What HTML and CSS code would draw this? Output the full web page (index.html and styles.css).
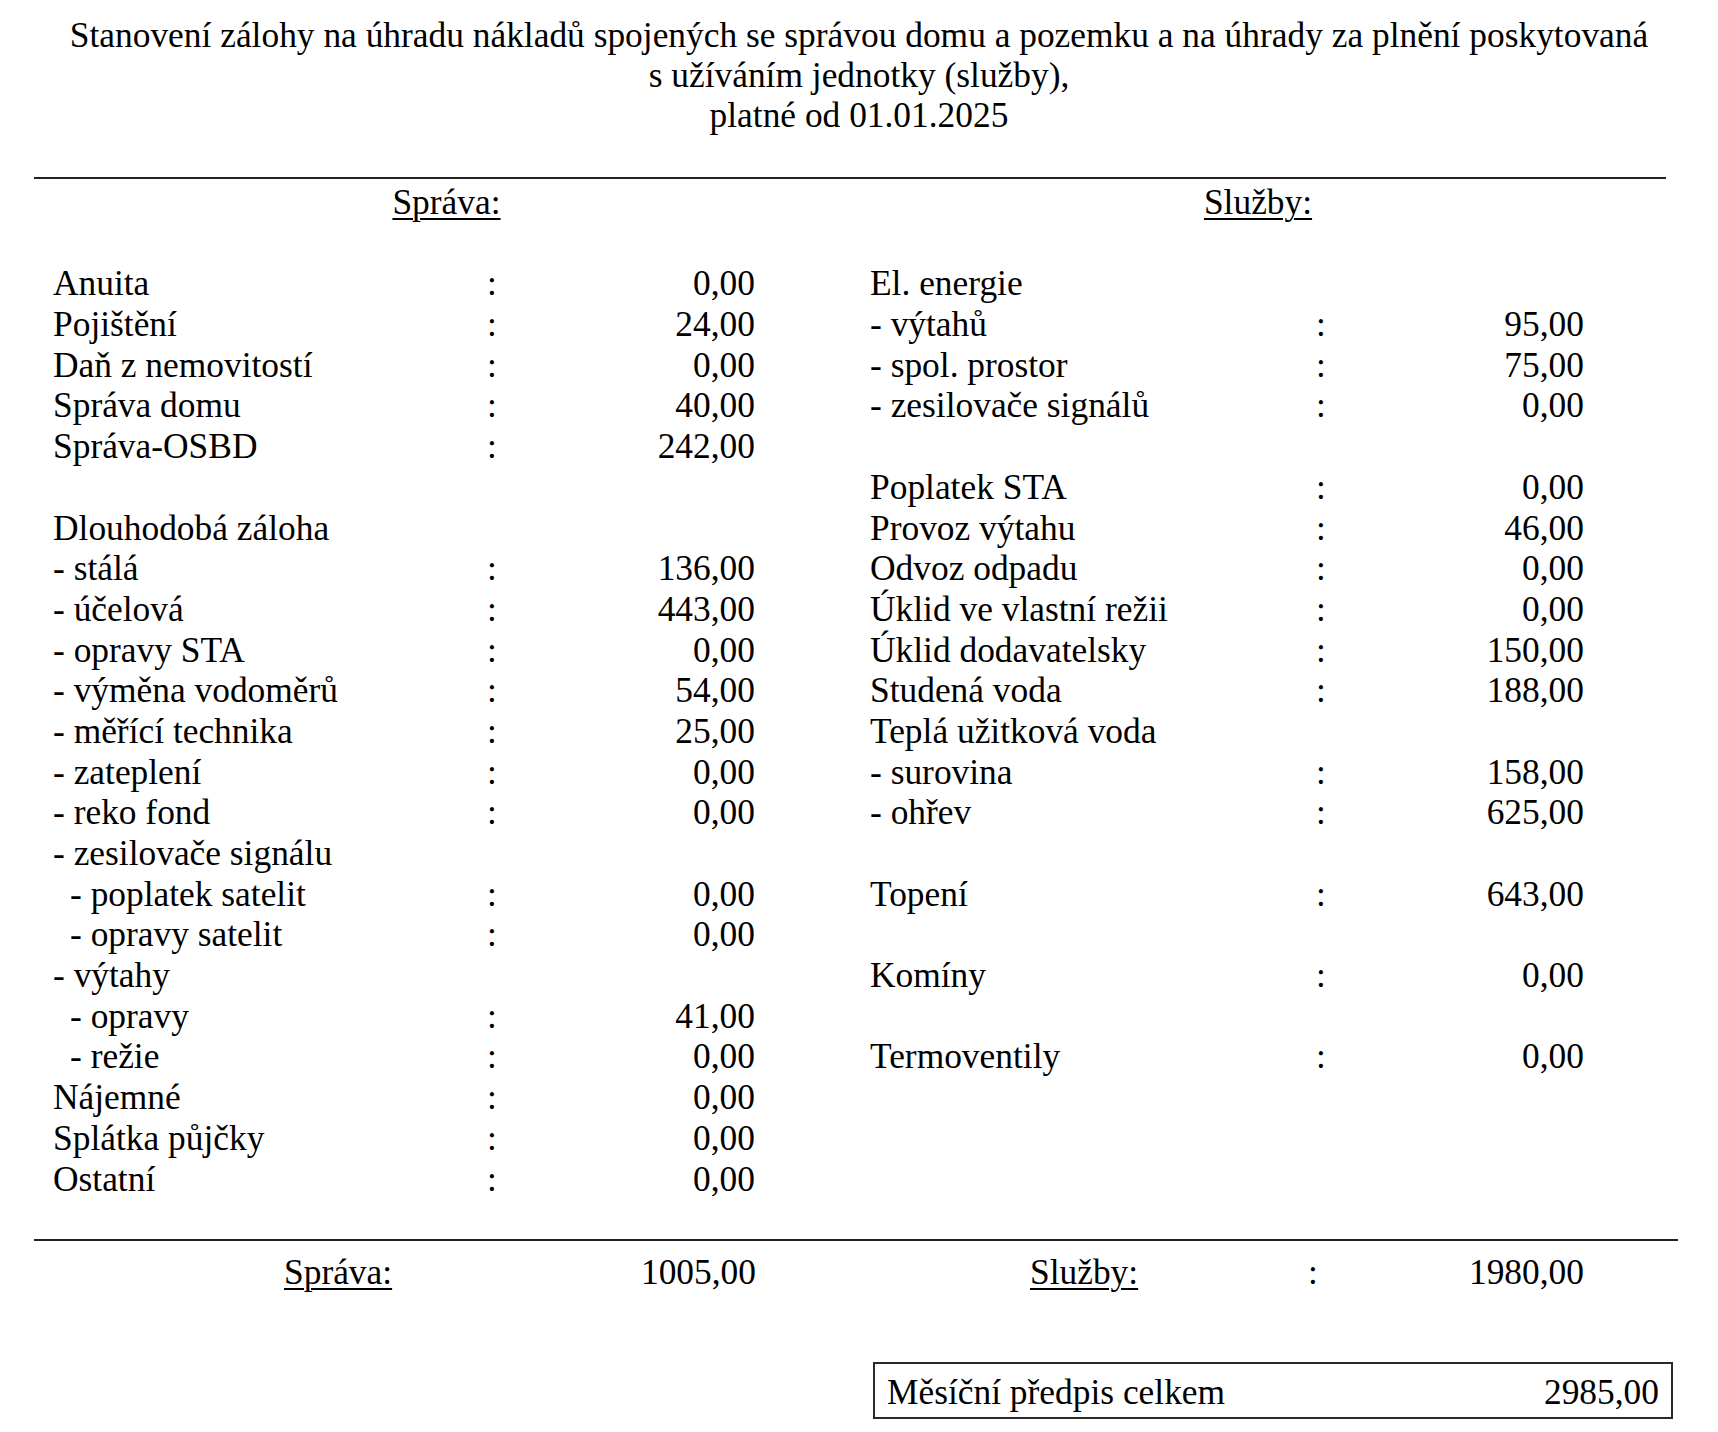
FILE: index.html
```html
<!DOCTYPE html>
<html lang="cs">
<head>
<meta charset="utf-8">
<title>Stanovení zálohy</title>
<link rel="stylesheet" href="styles.css">
</head>
<body>
<div class="page">
  <div class="title">Stanovení zálohy na úhradu nákladů spojených se správou domu a pozemku a na úhrady za plnění poskytovaná<br>s užíváním jednotky (služby),<br>platné od 01.01.2025</div>
  <div class="rule rule-top"></div>
  <div class="heads">
    <div class="head head-left"><span class="ul">Správa:</span></div>
    <div class="head head-right"><span class="ul">Služby:</span></div>
  </div>
  <div class="sections">
    <div class="section section-left">
      <div class="row"><span class="lbl">Anuita</span><span class="col">:</span><span class="num">0,00</span></div>
      <div class="row"><span class="lbl">Pojištění</span><span class="col">:</span><span class="num">24,00</span></div>
      <div class="row"><span class="lbl">Daň z nemovitostí</span><span class="col">:</span><span class="num">0,00</span></div>
      <div class="row"><span class="lbl">Správa domu</span><span class="col">:</span><span class="num">40,00</span></div>
      <div class="row"><span class="lbl">Správa-OSBD</span><span class="col">:</span><span class="num">242,00</span></div>
      <div class="row"></div>
      <div class="row"><span class="lbl">Dlouhodobá záloha</span></div>
      <div class="row"><span class="lbl">- stálá</span><span class="col">:</span><span class="num">136,00</span></div>
      <div class="row"><span class="lbl">- účelová</span><span class="col">:</span><span class="num">443,00</span></div>
      <div class="row"><span class="lbl">- opravy STA</span><span class="col">:</span><span class="num">0,00</span></div>
      <div class="row"><span class="lbl">- výměna vodoměrů</span><span class="col">:</span><span class="num">54,00</span></div>
      <div class="row"><span class="lbl">- měřící technika</span><span class="col">:</span><span class="num">25,00</span></div>
      <div class="row"><span class="lbl">- zateplení</span><span class="col">:</span><span class="num">0,00</span></div>
      <div class="row"><span class="lbl">- reko fond</span><span class="col">:</span><span class="num">0,00</span></div>
      <div class="row"><span class="lbl">- zesilovače signálu</span></div>
      <div class="row"><span class="lbl sub">- poplatek satelit</span><span class="col">:</span><span class="num">0,00</span></div>
      <div class="row"><span class="lbl sub">- opravy satelit</span><span class="col">:</span><span class="num">0,00</span></div>
      <div class="row"><span class="lbl">- výtahy</span></div>
      <div class="row"><span class="lbl sub">- opravy</span><span class="col">:</span><span class="num">41,00</span></div>
      <div class="row"><span class="lbl sub">- režie</span><span class="col">:</span><span class="num">0,00</span></div>
      <div class="row"><span class="lbl">Nájemné</span><span class="col">:</span><span class="num">0,00</span></div>
      <div class="row"><span class="lbl">Splátka půjčky</span><span class="col">:</span><span class="num">0,00</span></div>
      <div class="row"><span class="lbl">Ostatní</span><span class="col">:</span><span class="num">0,00</span></div>
    </div>
    <div class="section section-right">
      <div class="row"><span class="lbl">El. energie</span></div>
      <div class="row"><span class="lbl">- výtahů</span><span class="col">:</span><span class="num">95,00</span></div>
      <div class="row"><span class="lbl">- spol. prostor</span><span class="col">:</span><span class="num">75,00</span></div>
      <div class="row"><span class="lbl">- zesilovače signálů</span><span class="col">:</span><span class="num">0,00</span></div>
      <div class="row"></div>
      <div class="row"><span class="lbl">Poplatek STA</span><span class="col">:</span><span class="num">0,00</span></div>
      <div class="row"><span class="lbl">Provoz výtahu</span><span class="col">:</span><span class="num">46,00</span></div>
      <div class="row"><span class="lbl">Odvoz odpadu</span><span class="col">:</span><span class="num">0,00</span></div>
      <div class="row"><span class="lbl">Úklid ve vlastní režii</span><span class="col">:</span><span class="num">0,00</span></div>
      <div class="row"><span class="lbl">Úklid dodavatelsky</span><span class="col">:</span><span class="num">150,00</span></div>
      <div class="row"><span class="lbl">Studená voda</span><span class="col">:</span><span class="num">188,00</span></div>
      <div class="row"><span class="lbl">Teplá užitková voda</span></div>
      <div class="row"><span class="lbl">- surovina</span><span class="col">:</span><span class="num">158,00</span></div>
      <div class="row"><span class="lbl">- ohřev</span><span class="col">:</span><span class="num">625,00</span></div>
      <div class="row"></div>
      <div class="row"><span class="lbl">Topení</span><span class="col">:</span><span class="num">643,00</span></div>
      <div class="row"></div>
      <div class="row"><span class="lbl">Komíny</span><span class="col">:</span><span class="num">0,00</span></div>
      <div class="row"></div>
      <div class="row"><span class="lbl">Termoventily</span><span class="col">:</span><span class="num">0,00</span></div>
    </div>
  </div>
  <div class="rule rule-bottom"></div>
  <div class="totals">
    <div class="total total-left"><span class="ul">Správa:</span><span class="num">1005,00</span></div>
    <div class="total total-right"><span class="lbl"><span class="ul">Služby:</span></span><span class="col">:</span><span class="num">1980,00</span></div>
  </div>
  <div class="grand"><span>Měsíční předpis celkem</span><span>2985,00</span></div>
</div>
</body>
</html>
```
FILE: styles.css
```css
html, body {
  margin: 0;
  padding: 0;
  background: #fff;
}

.page {
  font-family: "Liberation Serif", "Times New Roman", serif;
  font-size: 35.4px;
  color: #000;
  width: 1718px;
}

.title {
  padding-top: 15px;
  line-height: 40px;
  text-align: center;
  white-space: nowrap;
}

.rule {
  height: 2px;
  background: #222;
}

.rule-top {
  margin-top: 42px;
  margin-left: 34px;
  width: 1632px;
}

.heads {
  display: flex;
  margin-top: 3px;
  padding-left: 53px;
  height: 81.4px;
  line-height: 40.7px;
}

.head {
  text-align: center;
}

.head-left {
  width: 787px;
}

.head-right {
  margin-left: 30px;
  width: 776px;
}

.ul {
  text-decoration: underline;
  text-decoration-thickness: 1.5px;
  text-underline-offset: 4px;
}

.sections {
  display: flex;
  padding-left: 53px;
}

.section-left {
  width: 817px;
}

.row {
  display: grid;
  height: 40.7px;
  line-height: 40.7px;
  white-space: nowrap;
}

.section-left .row {
  grid-template-columns: 434px 10px 258px;
}

.section-right .row {
  grid-template-columns: 446px 10px 258px;
}

.lbl {
  white-space: pre;
}

.sub {
  padding-left: 17px;
}

.col {
  text-align: center;
}

.num {
  text-align: right;
}

.rule-bottom {
  margin-top: 39.5px;
  margin-left: 34px;
  width: 1644px;
}

.totals {
  display: flex;
  margin-top: 11px;
  padding-left: 284px;
  height: 40.7px;
  line-height: 40.7px;
  white-space: nowrap;
}

.total-left {
  display: flex;
  justify-content: space-between;
  width: 472px;
}

.total-right {
  display: grid;
  grid-template-columns: 278px 10px 266px;
  margin-left: 274px;
}

.grand {
  box-sizing: border-box;
  display: flex;
  justify-content: space-between;
  margin-top: 70px;
  margin-left: 873px;
  width: 800px;
  height: 57px;
  padding: 3px 12px 0 12px;
  line-height: 50px;
  border: 2px solid #2a2a2a;
  white-space: nowrap;
}
```
